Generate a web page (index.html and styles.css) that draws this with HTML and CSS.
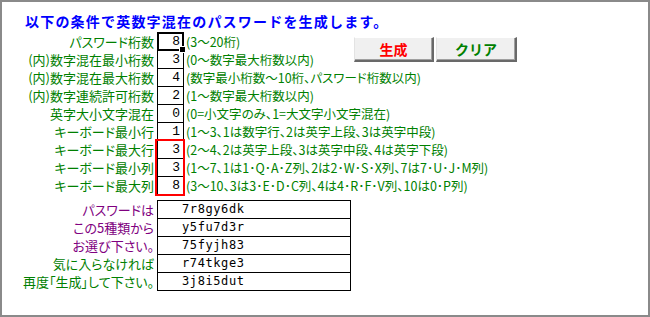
FILE: index.html
```html
<!DOCTYPE html>
<html lang="ja">
<head>
<meta charset="utf-8">
<title>パスワード生成</title>
<link rel="stylesheet" href="styles.css">
</head>
<body>
<div class="sheet">
  <h1 class="title">以下の条件で英数字混在のパスワードを生成します。</h1>

  <div class="params">
    <div class="label r1">パスワード桁数</div>
    <div class="cell r1 active">8</div>
    <div class="note r1">(3～20桁)</div>

    <div class="label r2">(内)数字混在最小桁数</div>
    <div class="cell r2">3</div>
    <div class="note r2">(0～数字最大桁数以内)</div>

    <div class="buttons">
      <button class="btn btn-gen" type="button">生成</button>
      <button class="btn btn-clear" type="button">クリア</button>
    </div>

    <div class="label r3">(内)数字混在最大桁数</div>
    <div class="cell r3">4</div>
    <div class="note wide r3">(数字最小桁数～10桁、パスワード桁数以内)</div>

    <div class="label r4">(内)数字連続許可桁数</div>
    <div class="cell r4">2</div>
    <div class="note wide r4">(1～数字最大桁数以内)</div>

    <div class="label r5">英字大小文字混在</div>
    <div class="cell r5">0</div>
    <div class="note wide r5">(0=小文字のみ、1=大文字小文字混在)</div>

    <div class="label r6">キーボード最小行</div>
    <div class="cell r6">1</div>
    <div class="note wide r6">(1～3、1は数字行、2は英字上段、3は英字中段)</div>

    <div class="label r7">キーボード最大行</div>
    <div class="cell r7">3</div>
    <div class="note wide r7">(2～4、2は英字上段、3は英字中段、4は英字下段)</div>

    <div class="label r8">キーボード最小列</div>
    <div class="cell r8">3</div>
    <div class="note wide r8">(1～7、1は1･Q･A･Z列、2は2･W･S･X列、7は7･U･J･M列)</div>

    <div class="label r9">キーボード最大列</div>
    <div class="cell last r9">8</div>
    <div class="note wide r9">(3～10、3は3･E･D･C列、4は4･R･F･V列、10は0･P列)</div>

    <div class="highlight"></div>
  </div>

  <div class="results">
    <div class="rlabel purple">パスワードは</div>
    <div class="pw">7r8gy6dk</div>
    <div class="rlabel purple">この5種類から</div>
    <div class="pw">y5fu7d3r</div>
    <div class="rlabel purple">お選び下さい。</div>
    <div class="pw">75fyjh83</div>
    <div class="rlabel green">気に入らなければ</div>
    <div class="pw">r74tkge3</div>
    <div class="rlabel green">再度「生成」して下さい。</div>
    <div class="pw last">3j8i5dut</div>
  </div>
</div>
</body>
</html>
```

FILE: styles.css
```css
* { box-sizing: border-box; }

html, body {
  margin: 0;
  padding: 0;
  background: #ffffff;
}

body {
  font-family: "Noto Sans CJK JP", "Liberation Sans", sans-serif;
  font-size: 12px;
}

.sheet {
  width: 650px;
  height: 317px;
  border: 2px solid #8a8a8a;
  background: #ffffff;
  padding-top: 10px;
}

.title {
  margin: 0 0 0 23px;
  font-size: 14px;
  line-height: 18px;
  font-weight: bold;
  color: #0000ff;
  letter-spacing: 1.2px;
  white-space: nowrap;
}

.params {
  margin-top: 2px;
  display: grid;
  grid-template-columns: 155px 27px 170px 1fr;
  grid-template-rows: repeat(9, 18px);
}

.label {
  grid-column: 1;
  text-align: right;
  padding-right: 3px;
  color: #008000;
  font-size: 13px;
  line-height: 17px;
  padding-top: 1px;
  white-space: nowrap;
  font-feature-settings: "palt";
}

.cell {
  grid-column: 2;
  position: relative;
  border: 1px solid #000;
  border-bottom: none;
  text-align: right;
  padding-right: 3px;
  font-family: "Liberation Mono", "DejaVu Sans Mono", monospace;
  font-size: 13px;
  line-height: 17px;
  color: #000;
}

.cell.last {
  border-bottom: 1px solid #000;
  height: 19px;
}

.cell.active {
  box-shadow: inset 0 0 0 1px #000, inset 0 0 0 2px #fff;
}

.cell.active::after {
  content: "";
  position: absolute;
  right: -3px;
  bottom: -3px;
  width: 5px;
  height: 5px;
  background: #000;
  border: 1px solid #fff;
  z-index: 2;
}

.note {
  grid-column: 3;
  padding-left: 2px;
  color: #008000;
  font-size: 12.5px;
  line-height: 17px;
  padding-top: 1px;
  white-space: nowrap;
  font-feature-settings: "palt";
}

.note.wide {
  grid-column: 3 / span 2;
}

.r1 { grid-row: 1; }
.r2 { grid-row: 2; }
.r3 { grid-row: 3; }
.r4 { grid-row: 4; }
.r5 { grid-row: 5; }
.r6 { grid-row: 6; }
.r7 { grid-row: 7; }
.r8 { grid-row: 8; }
.r9 { grid-row: 9; }

.buttons {
  grid-column: 4;
  grid-row: 1 / span 2;
  display: flex;
  align-items: center;
  gap: 2px;
  padding-bottom: 1px;
}

.btn {
  height: 25px;
  width: 80px;
  padding: 0;
  margin: 0;
  background: #f0f0f0;
  border-style: solid;
  border-width: 1px 2px 2px 1px;
  border-color: #ffffff #696969 #696969 #e3e3e3;
  box-shadow: inset -1px -1px 0 #a0a0a0;
  font-family: "Noto Sans CJK JP", sans-serif;
  font-size: 14px;
  font-weight: bold;
  line-height: 20px;
  cursor: pointer;
}

.btn-gen { color: #ff0000; }
.btn-clear { color: #008000; width: 81px; }

.highlight {
  grid-column: 2;
  grid-row: 7 / span 3;
  margin: -1px -1px -2px -2px;
  border: 2px solid #ff0000;
  z-index: 3;
  pointer-events: none;
}

.results {
  margin-top: 6px;
  display: grid;
  grid-template-columns: 155px 194px;
  grid-auto-rows: 18px;
}

.rlabel {
  text-align: right;
  padding-right: 3px;
  font-size: 13px;
  line-height: 17px;
  padding-top: 1px;
  white-space: nowrap;
  font-feature-settings: "palt";
}

.purple { color: #800080; }
.green { color: #008000; }

.pw {
  border: 1px solid #000;
  border-bottom: none;
  padding-left: 24px;
  font-family: "DejaVu Sans Mono", "Liberation Mono", monospace;
  font-size: 12px;
  letter-spacing: 0.6px;
  line-height: 17px;
  color: #000;
}

.pw.last {
  border-bottom: 1px solid #000;
  height: 19px;
}
```
